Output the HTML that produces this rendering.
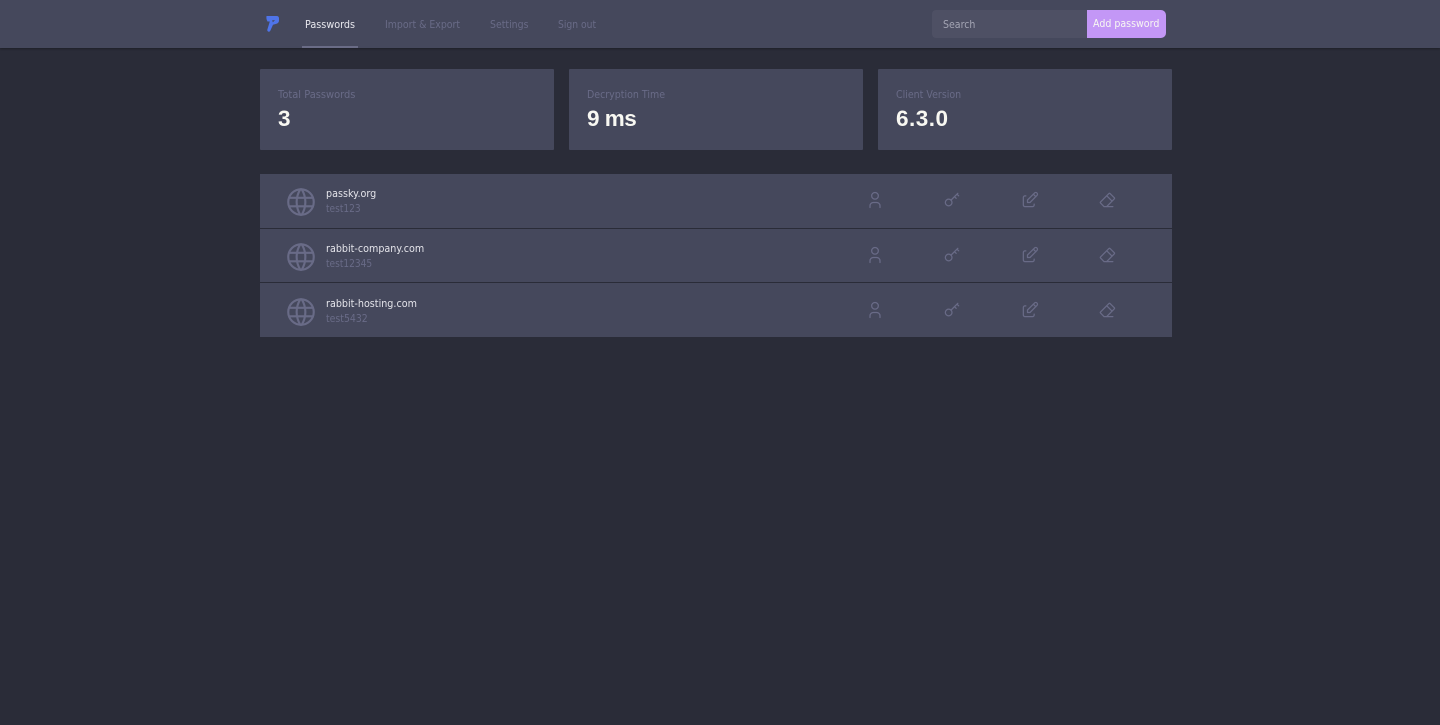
<!DOCTYPE html>
<html lang="en"><head><meta charset="utf-8"><title>Passky</title>
<style>
html,body{margin:0;padding:0;width:1440px;height:725px;overflow:hidden;background:#2a2c38;font-family:"DejaVu Sans","Liberation Sans",sans-serif}
.a{position:absolute;white-space:nowrap}
.nav{top:0;left:0;width:1440px;height:48px;background:#45485c;box-shadow:0 1px 2px rgba(0,0,0,.3)}
.l,.cl,.n,.u,.s{transform-origin:0 50%}
.l{top:18px;font-size:10.6px;line-height:14px;color:#696b87;transform:scaleX(.885)}
.card{top:69px;width:294px;height:81px;background:#45485c;border-radius:1px}
.cl{top:88px;font-size:10.4px;line-height:14px;color:#696b87;transform:scaleX(.91)}
.cv{top:104px;font-size:22.5px;line-height:30px;font-weight:bold;color:#f8f8f2;font-family:"Liberation Sans",sans-serif}
.row{left:260px;width:912px;background:#45485c}
.n{left:326px;font-size:10.6px;line-height:14px;color:#e4e4ea;transform:scaleX(.905)}
.u{left:326px;font-size:10.4px;line-height:14px;color:#696b87;transform:scaleX(.87)}
svg{position:absolute;fill:none;stroke:#696b87;stroke-linecap:round;stroke-linejoin:round;stroke-width:1.5}
.i{width:20px;height:20px}
.g{width:34px;height:34px;left:283.5px}
</style></head><body>
<div class="a nav"></div>
<svg style="left:260px;top:10px;stroke:none" width="26" height="26" viewBox="0 0 26 26"><path fill="#4f74e8" d="M6.500 6H16.500Q19 6 19 8.500V10.500Q19 13 16.500 13.700L13 14.800L10.300 20.800Q9.500 22.200 8 21.500Q7 20.800 7.300 19.800L9.800 11.500H7.500Q6 9 6.500 6Z"/><path fill="#45485c" d="M12.200 10.200H15L12.800 12.200Z"/></svg>
<div class="a l" style="left:305px;color:#e8e8ee;transform:scaleX(.91)">Passwords</div>
<div class="a" style="left:302px;top:46px;width:56px;height:2px;background:#6a6c86"></div>
<div class="a l" style="left:385px">Import &amp; Export</div>
<div class="a l" style="left:490px">Settings</div>
<div class="a l" style="left:558px;transform:scaleX(.87)">Sign out</div>
<div class="a" style="left:932px;top:10px;width:155px;height:28px;background:#4e5064;border-radius:4px 0 0 4px"></div>
<div class="a s" style="left:943px;top:18px;font-size:10.6px;line-height:14px;color:#a4a5b4;transform:scaleX(.89)">Search</div>
<div class="a" style="left:1087px;top:10px;width:79px;height:28px;background:#c397f6;border-radius:0 5px 5px 0"></div>
<div class="a s" style="left:1093px;top:18px;color:#f8f8f2;font-size:10.2px;line-height:14px;transform:scaleX(.93)">Add password</div>

<div class="a card" style="left:260px"></div><div class="a card" style="left:569px"></div><div class="a card" style="left:878px"></div>
<div class="a cl" style="left:278px;transform:scaleX(.95)">Total Passwords</div><div class="a cv" style="left:278px">3</div>
<div class="a cl" style="left:587px">Decryption Time</div><div class="a cv" style="left:587px;letter-spacing:-.5px">9 ms</div>
<div class="a cl" style="left:896px">Client Version</div><div class="a cv" style="left:896px;letter-spacing:.5px">6.3.0</div>

<div class="a row" style="top:174px;height:54px"></div>
<div class="a row" style="top:229px;height:53px"></div>
<div class="a row" style="top:283px;height:54px"></div>

<div class="a n" style="top:187px">passky.org</div><div class="a u" style="top:202px">test123</div>
<div class="a n" style="top:242px">rabbit-company.com</div><div class="a u" style="top:257px">test12345</div>
<div class="a n" style="top:297px">rabbit-hosting.com</div><div class="a u" style="top:312px;transform:scaleX(.9)">test5432</div>

<svg class="g" style="top:185px" viewBox="0 0 24 24"><circle cx="12" cy="12" r="9"/><path d="M3.600 9h16.800M3.600 15h16.800M11.500 3a17 17 0 0 0 0 18M12.500 3a17 17 0 0 1 0 18"/></svg>
<svg class="g" style="top:240px" viewBox="0 0 24 24"><circle cx="12" cy="12" r="9"/><path d="M3.600 9h16.800M3.600 15h16.800M11.500 3a17 17 0 0 0 0 18M12.500 3a17 17 0 0 1 0 18"/></svg>
<svg class="g" style="top:294.500px" viewBox="0 0 24 24"><circle cx="12" cy="12" r="9"/><path d="M3.600 9h16.800M3.600 15h16.800M11.500 3a17 17 0 0 0 0 18M12.500 3a17 17 0 0 1 0 18"/></svg>

<svg class="i" style="left:865px;top:190px" viewBox="0 0 24 24"><circle cx="12" cy="7" r="4"/><path d="M6 21v-2a4 4 0 0 1 4-4h4a4 4 0 0 1 4 4v2"/></svg>
<svg class="i" style="left:942px;top:190px" viewBox="0 0 24 24"><circle cx="8" cy="15" r="4"/><path d="M10.850 12.150L19 4M18 5l2 2M15 8l2 2"/></svg>
<svg class="i" style="left:1020px;top:190px" viewBox="0 0 24 24"><path d="M7 7h-1a2 2 0 0 0-2 2v9a2 2 0 0 0 2 2h9a2 2 0 0 0 2-2v-1"/><path d="M20.385 6.585a2.100 2.100 0 0 0-2.970-2.970l-8.415 8.385v3h3l8.385-8.415z"/><path d="M16 5l3 3"/></svg>
<svg class="i" style="left:1097px;top:190px" viewBox="0 0 24 24"><path d="M19 20h-10.500l-4.210-4.300a1 1 0 0 1 0-1.410l10-10a1 1 0 0 1 1.410 0l5 5a1 1 0 0 1 0 1.410l-9.200 9.300"/><path d="M18 13.300l-6.300-6.300"/></svg>

<svg class="i" style="left:865px;top:245px" viewBox="0 0 24 24"><circle cx="12" cy="7" r="4"/><path d="M6 21v-2a4 4 0 0 1 4-4h4a4 4 0 0 1 4 4v2"/></svg>
<svg class="i" style="left:942px;top:245px" viewBox="0 0 24 24"><circle cx="8" cy="15" r="4"/><path d="M10.850 12.150L19 4M18 5l2 2M15 8l2 2"/></svg>
<svg class="i" style="left:1020px;top:245px" viewBox="0 0 24 24"><path d="M7 7h-1a2 2 0 0 0-2 2v9a2 2 0 0 0 2 2h9a2 2 0 0 0 2-2v-1"/><path d="M20.385 6.585a2.100 2.100 0 0 0-2.970-2.970l-8.415 8.385v3h3l8.385-8.415z"/><path d="M16 5l3 3"/></svg>
<svg class="i" style="left:1097px;top:245px" viewBox="0 0 24 24"><path d="M19 20h-10.500l-4.210-4.300a1 1 0 0 1 0-1.410l10-10a1 1 0 0 1 1.410 0l5 5a1 1 0 0 1 0 1.410l-9.200 9.300"/><path d="M18 13.300l-6.300-6.300"/></svg>

<svg class="i" style="left:865px;top:300px" viewBox="0 0 24 24"><circle cx="12" cy="7" r="4"/><path d="M6 21v-2a4 4 0 0 1 4-4h4a4 4 0 0 1 4 4v2"/></svg>
<svg class="i" style="left:942px;top:300px" viewBox="0 0 24 24"><circle cx="8" cy="15" r="4"/><path d="M10.850 12.150L19 4M18 5l2 2M15 8l2 2"/></svg>
<svg class="i" style="left:1020px;top:300px" viewBox="0 0 24 24"><path d="M7 7h-1a2 2 0 0 0-2 2v9a2 2 0 0 0 2 2h9a2 2 0 0 0 2-2v-1"/><path d="M20.385 6.585a2.100 2.100 0 0 0-2.970-2.970l-8.415 8.385v3h3l8.385-8.415z"/><path d="M16 5l3 3"/></svg>
<svg class="i" style="left:1097px;top:300px" viewBox="0 0 24 24"><path d="M19 20h-10.500l-4.210-4.300a1 1 0 0 1 0-1.410l10-10a1 1 0 0 1 1.410 0l5 5a1 1 0 0 1 0 1.410l-9.200 9.300"/><path d="M18 13.300l-6.300-6.300"/></svg>
</body></html>
